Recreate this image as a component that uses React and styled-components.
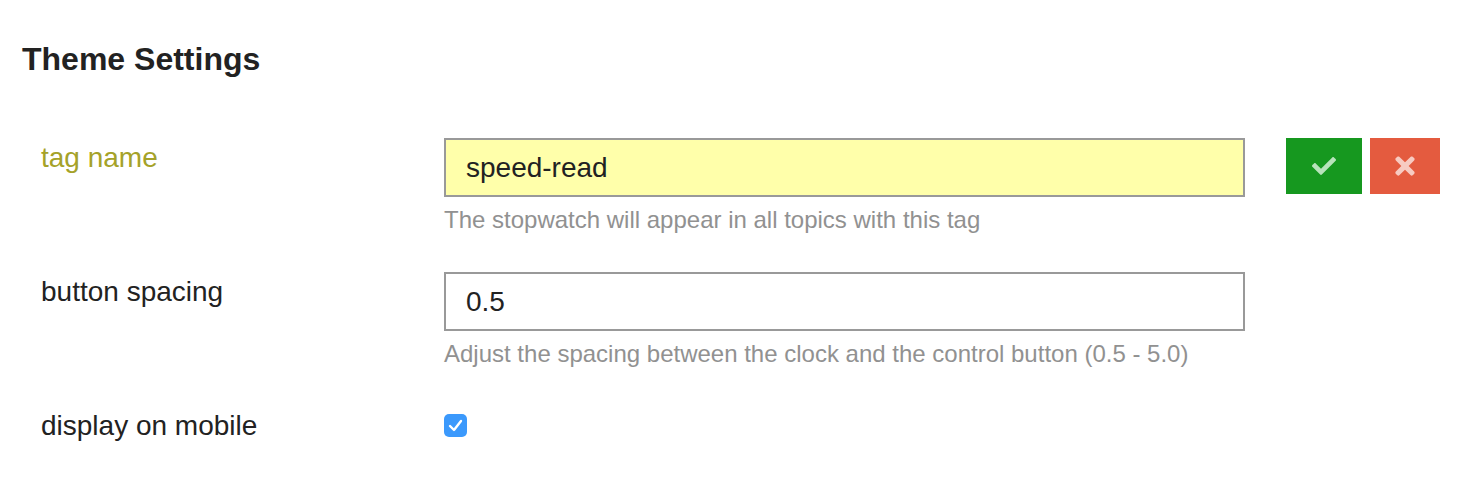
import styled, { createGlobalStyle } from "styled-components";
import { FaCheck, FaTimes } from "react-icons/fa";

const GlobalStyle = createGlobalStyle`
    body {
        margin: 0;
        background: #fff;
        font-family: "Liberation Sans", Arial, sans-serif;
        color: #222;
    }
`;

const Page = styled.div`
    padding: 40px 22px 0 22px;
`;

const Title = styled.h2`
    margin: 0 0 60px 0;
    font-size: 32px;
    line-height: 38px;
    font-weight: bold;
    color: #222;
`;

const Row = styled.div`
    display: flex;
    align-items: flex-start;
    padding-left: 19px;
    margin-bottom: ${(p) => p.$gap || 38}px;
`;

const Label = styled.div`
    width: 403px;
    flex-shrink: 0;
    font-size: 28px;
    line-height: 34px;
    padding-top: ${(p) => p.$top || 0}px;
    color: ${(p) => (p.$dirty ? "#a5a229" : "#222")};
`;

const Field = styled.div`
    display: flex;
    flex-direction: column;
`;

const TextInput = styled.input`
    box-sizing: border-box;
    width: 801px;
    height: 59px;
    border: 2px solid #999;
    padding: 0 20px;
    margin: 0;
    font-family: "Liberation Sans", Arial, sans-serif;
    font-size: 28px;
    color: #222;
    background: ${(p) => (p.$dirty ? "#ffffaa" : "#fff")};
    outline: none;
`;

const Help = styled.div`
    margin-top: 8px;
    font-size: 24px;
    line-height: 29px;
    color: #919191;
`;

const Actions = styled.div`
    display: flex;
    gap: 8px;
    margin-left: 41px;
`;

const ActionButton = styled.button`
    display: flex;
    align-items: center;
    justify-content: center;
    width: ${(p) => p.$w}px;
    height: 56px;
    border: none;
    padding: 0;
    cursor: pointer;
    background: ${(p) => p.$bg};
    color: ${(p) => p.$fg};
`;

const CheckBox = styled.span`
    display: flex;
    align-items: center;
    justify-content: center;
    box-sizing: border-box;
    width: 23px;
    height: 23px;
    margin-top: 7px;
    border-radius: 5px;
    background: #3b99fc;
`;

export default function App() {
    return (
        <>
            <GlobalStyle />
            <Page>
                <Title>Theme Settings</Title>

                <Row>
                    <Label $dirty $top={3}>tag name</Label>
                    <Field>
                        <TextInput $dirty defaultValue="speed-read" />
                        <Help>The stopwatch will appear in all topics with this tag</Help>
                    </Field>
                    <Actions>
                        <ActionButton $w={76} $bg="#16981f" $fg="#b8e3bb">
                            <FaCheck size={24} />
                        </ActionButton>
                        <ActionButton $w={70} $bg="#e45b3f" $fg="#f7cbc2">
                            <FaTimes size={28} />
                        </ActionButton>
                    </Actions>
                </Row>

                <Row $gap={39}>
                    <Label $top={3}>button spacing</Label>
                    <Field>
                        <TextInput defaultValue="0.5" />
                        <Help>Adjust the spacing between the clock and the control button (0.5 - 5.0)</Help>
                    </Field>
                </Row>

                <Row>
                    <Label $top={2}>display on mobile</Label>
                    <CheckBox>
                        <svg width="15" height="13" viewBox="0 0 15 13">
                            <path d="M2 7 L6 11 L13 2" fill="none" stroke="#fff" strokeWidth="2.4" strokeLinecap="round" strokeLinejoin="round" />
                        </svg>
                    </CheckBox>
                </Row>
            </Page>
        </>
    );
}
